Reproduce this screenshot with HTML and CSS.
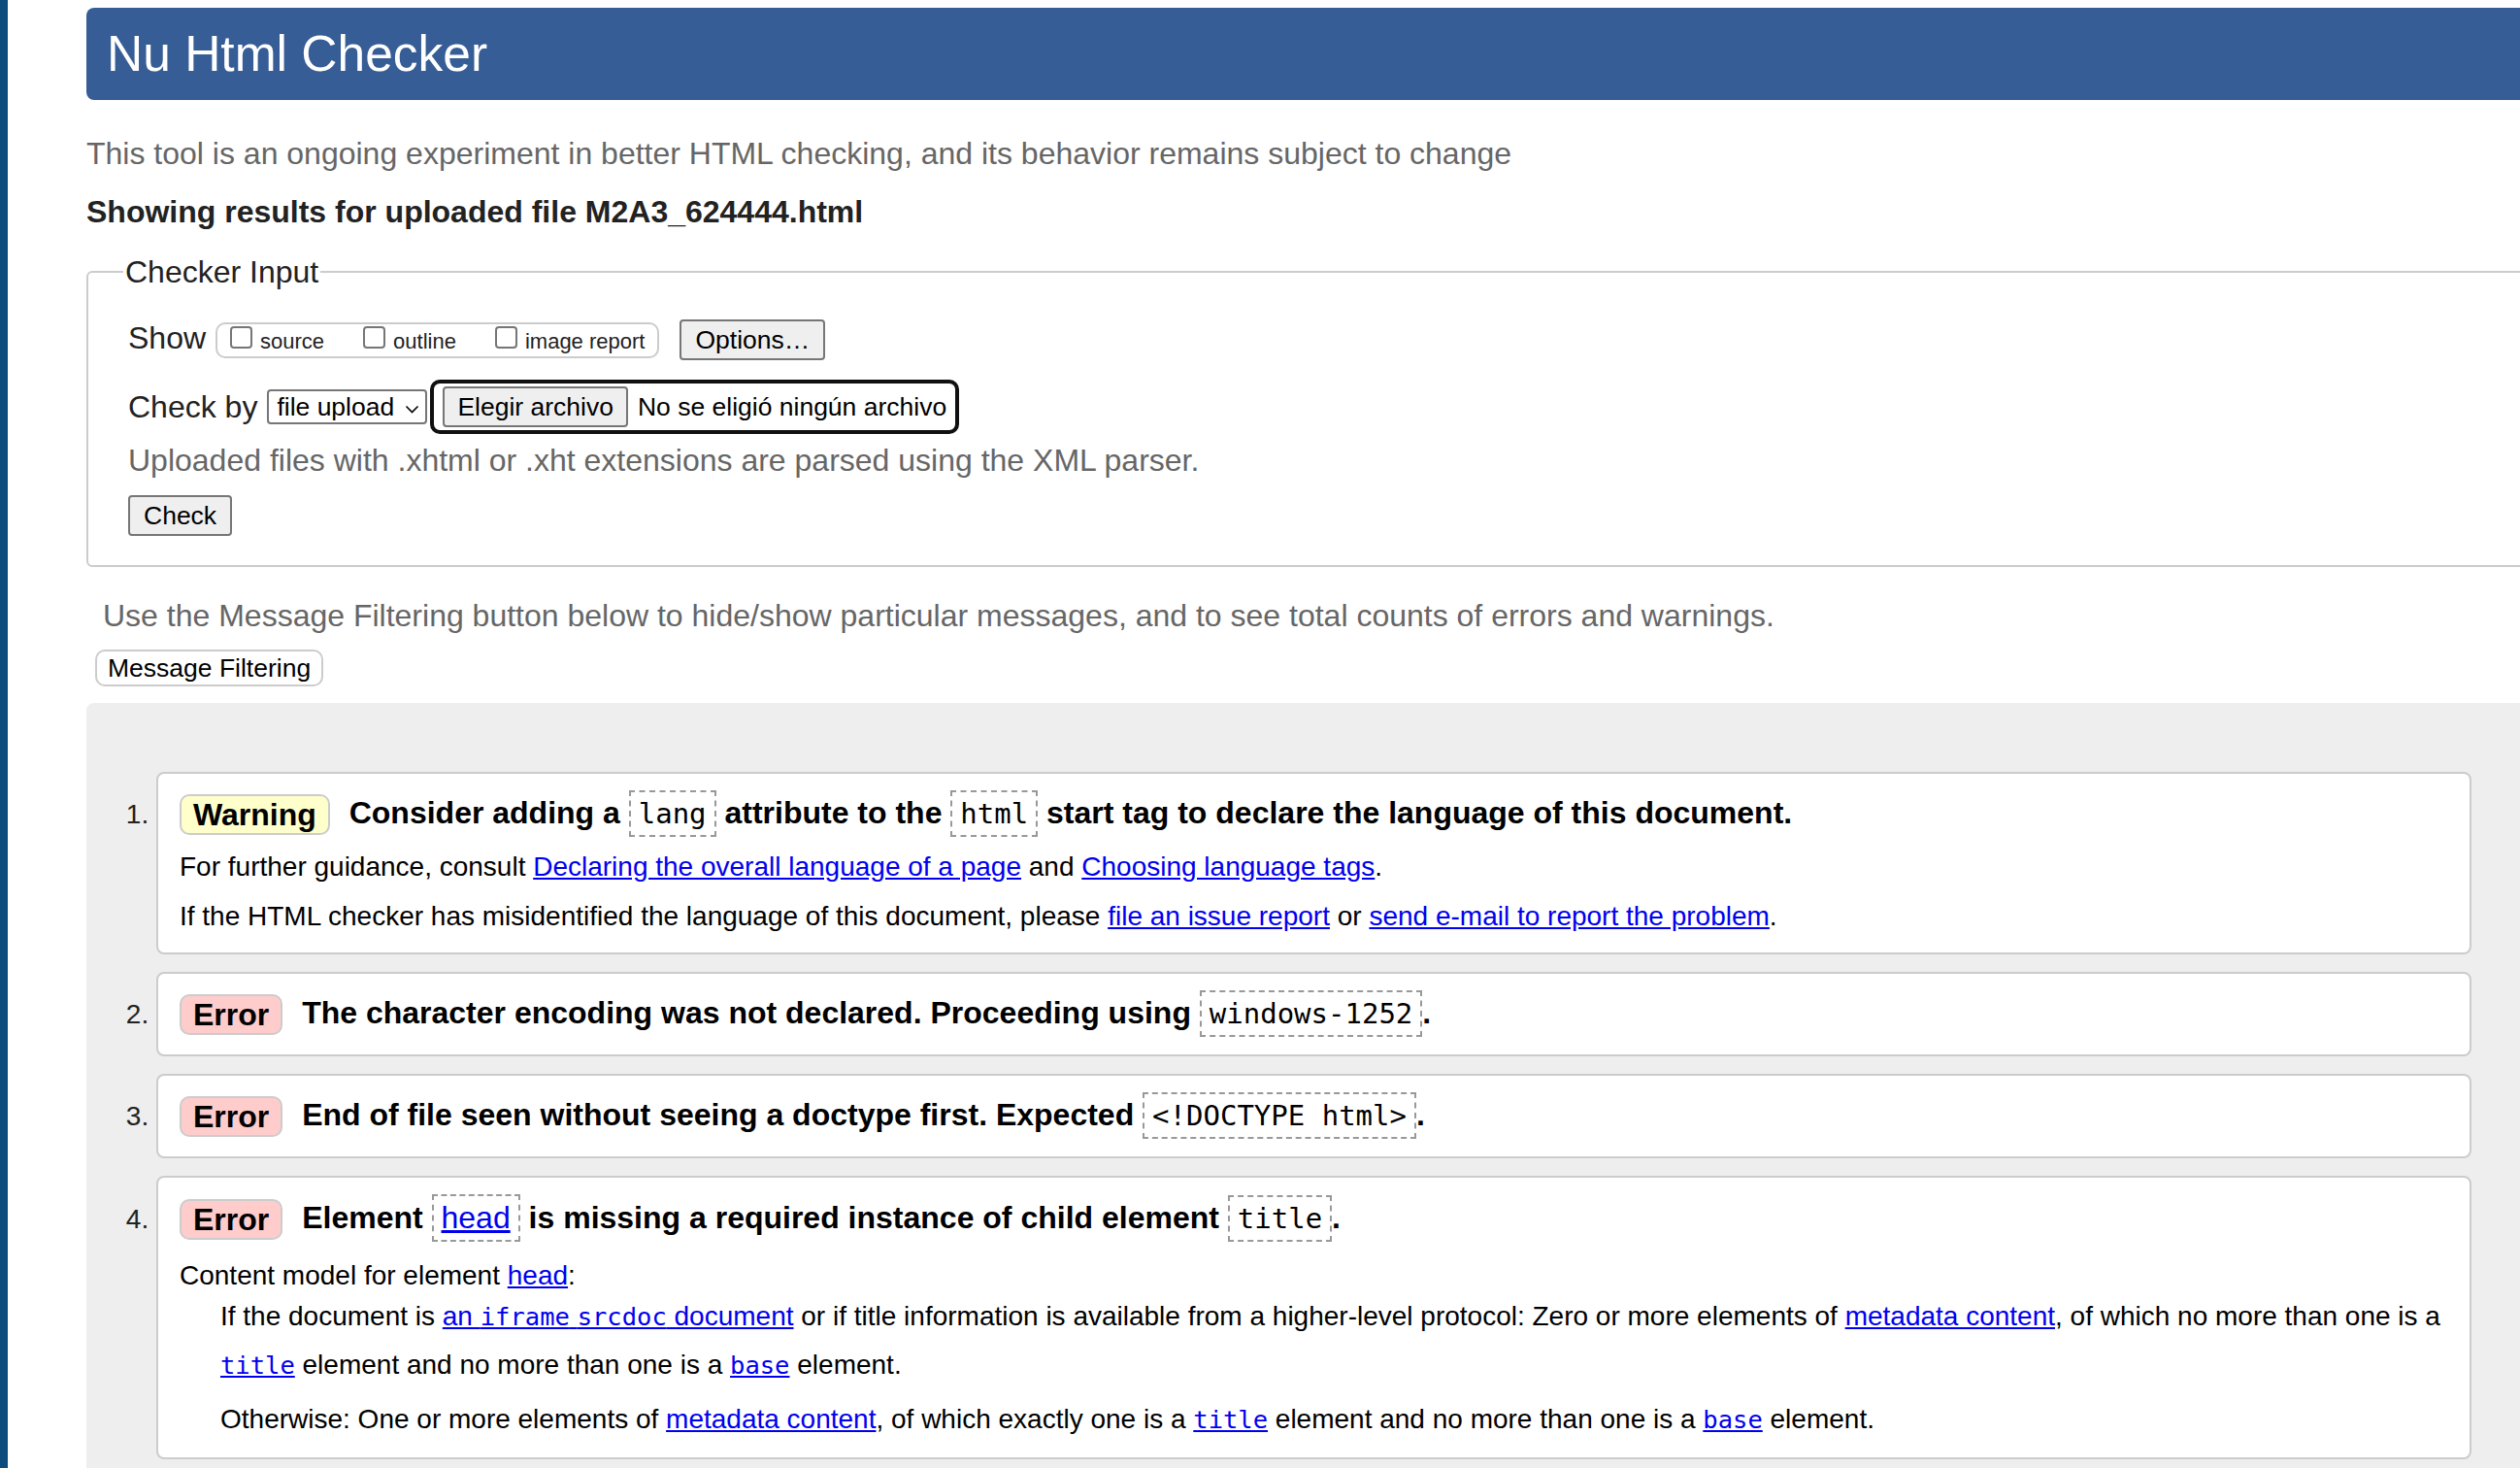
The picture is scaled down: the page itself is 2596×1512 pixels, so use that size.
FILE: index.html
```html
<!DOCTYPE html>
<html lang="en">
<head>
<meta charset="utf-8">
<title>Nu Html Checker</title>
<link rel="stylesheet" href="styles.css">
</head>
<body>
<header class="masthead"><h1>Nu Html Checker</h1></header>
<p class="lead">This tool is an ongoing experiment in better HTML checking, and its behavior remains subject to change</p>
<p class="result-for">Showing results for uploaded file M2A3_624444.html</p>
<fieldset class="input">
  <legend>Checker Input</legend>
  <div class="row show-row">
    <span class="row-label">Show</span>
    <span class="opts"><label class="opt"><input class="cb" type="checkbox">source</label><label class="opt"><input class="cb" type="checkbox">outline</label><label class="opt"><input class="cb" type="checkbox">image report</label></span>
    <button class="btn options-btn" type="button">Options…</button>
  </div>
  <div class="row check-row">
    <span class="row-label">Check by</span>
    <span class="select"><span class="select-text">file upload</span><svg class="chev" width="15" height="9" viewBox="0 0 15 9"><polyline points="1.5,1.5 7.5,7.5 13.5,1.5" fill="none" stroke="#000" stroke-width="1.6"/></svg></span>
    <span class="file"><button class="btn file-btn" type="button">Elegir archivo</button><span class="file-name">No se eligió ningún archivo</span></span>
  </div>
  <p class="note">Uploaded files with .xhtml or .xht extensions are parsed using the XML parser.</p>
  <button class="btn check-btn" type="button">Check</button>
</fieldset>
<p class="filter-note">Use the Message Filtering button below to hide/show particular messages, and to see total counts of errors and warnings.</p>
<button class="filter-btn" type="button">Message Filtering</button>
<section class="results">
  <ol class="msgs">
    <li class="msg">
      <p class="head"><span class="badge warn">Warning</span> Consider adding a <code class="cbox">lang</code> attribute to the <code class="cbox">html</code> start tag to declare the language of this document.</p>
      <p class="info first">For further guidance, consult <a href="#">Declaring the overall language of a page</a> and <a href="#">Choosing language tags</a>.</p>
      <p class="info last">If the HTML checker has misidentified the language of this document, please <a href="#">file an issue report</a> or <a href="#">send e-mail to report the problem</a>.</p>
    </li>
    <li class="msg">
      <p class="head"><span class="badge err">Error</span> The character encoding was not declared. Proceeding using <code class="cbox">windows-1252</code>.</p>
    </li>
    <li class="msg">
      <p class="head"><span class="badge err">Error</span> End of file seen without seeing a doctype first. Expected <code class="cbox">&lt;!DOCTYPE html&gt;</code>.</p>
    </li>
    <li class="msg">
      <p class="head"><span class="badge err">Error</span> Element <code class="cbox"><a class="sans" href="#">head</a></code> is missing a required instance of child element <code class="cbox">title</code>.</p>
      <p class="cm">Content model for element <a href="#">head</a>:</p>
      <div class="dd">
        <p class="dd-first">If the document is <a href="#">an <code>iframe</code> <code>srcdoc</code> document</a> or if title information is available from a higher-level protocol: Zero or more elements of <a href="#">metadata content</a>, of which no more than one is a <a href="#"><code>title</code></a> element and no more than one is a <a href="#"><code>base</code></a> element.</p>
        <p class="dd-last">Otherwise: One or more elements of <a href="#">metadata content</a>, of which exactly one is a <a href="#"><code>title</code></a> element and no more than one is a <a href="#"><code>base</code></a> element.</p>
      </div>
    </li>
  </ol>
</section>
</body>
</html>
```
FILE: styles.css
```css
html, body {
  margin: 0;
  overflow: hidden;
}
body {
  background: #fff;
  color: #222;
  font-family: "Liberation Sans", Arial, sans-serif;
  font-size: 26.5px;
  border-left: 8px solid #0e4c7e;
  padding-left: 81px;
  min-height: 1512px;
  box-sizing: border-box;
}
.masthead {
  margin: 8px -16px 0 0;
  height: 95px;
  background: #365d95;
  border-radius: 8px 0 0 8px;
  padding-left: 21px;
}
.masthead h1 {
  margin: 0;
  font-size: 51.5px;
  font-weight: normal;
  line-height: 95px;
  color: #fff;
}
.lead {
  margin: 35px 0 0;
  font-size: 32px;
  line-height: 40px;
  color: #666;
}
.result-for {
  margin: 20px 0 0;
  font-size: 32px;
  line-height: 40px;
  font-weight: bold;
  color: #222;
}
fieldset.input {
  margin: 22px -16px 0 0;
  padding: 29px 0 30px 41px;
  border: 2px solid #ccc;
  border-radius: 6px;
  min-width: 0;
}
fieldset.input legend {
  font-size: 32px;
  line-height: 40px;
  padding: 0 2px;
  margin-left: -5px;
}
.row {
  display: flex;
  align-items: center;
}
.show-row {
  height: 42px;
}
.row-label {
  font-size: 32px;
  line-height: 40px;
}
.show-row .row-label {
  padding-bottom: 4px;
}
.opts {
  margin-left: 10px;
  height: 37px;
  box-sizing: border-box;
  border: 2px solid #ccc;
  border-radius: 10px;
  padding: 2px 13px 0 13px;
  font-size: 22px;
  line-height: 30px;
  white-space: nowrap;
}
.opt + .opt {
  margin-left: 40px;
}
.cb {
  appearance: none;
  -webkit-appearance: none;
  width: 23px;
  height: 23px;
  margin: 0 8px 0 0;
  border: 2px solid #767676;
  border-radius: 4px;
  background: #fff;
  box-sizing: border-box;
  vertical-align: baseline;
}
.btn {
  font-family: "Liberation Sans", Arial, sans-serif;
  font-size: 26.5px;
  height: 42px;
  padding: 0 14px;
  border: 2px solid #767676;
  border-radius: 4px;
  background: #efefef;
  color: #000;
}
.options-btn {
  margin-left: 21px;
}
.check-row {
  margin-top: 20px;
  height: 56px;
}
.select {
  margin-left: 10px;
  width: 165px;
  height: 36px;
  box-sizing: border-box;
  display: flex;
  align-items: center;
  border: 2px solid #767676;
  border-radius: 4px;
  padding: 0 6px 0 8px;
  background: #fff;
  color: #000;
  font-size: 26.5px;
}
.chev {
  margin-left: auto;
  margin-top: 4px;
}
.file {
  margin-left: 3px;
  height: 56px;
  box-sizing: border-box;
  display: flex;
  align-items: center;
  border: 4px solid #101010;
  border-radius: 10px;
  padding: 0 9px;
  color: #000;
}
.file-btn {
  padding: 0 13px;
}
.file-name {
  margin-left: 10px;
  font-size: 26.5px;
}
.note {
  margin: 7px 0 0;
  font-size: 32px;
  line-height: 40px;
  color: #666;
}
.check-btn {
  display: block;
  margin-top: 16px;
}
.filter-note {
  margin: 30px 0 0;
  padding-left: 17px;
  font-size: 32px;
  line-height: 40px;
  color: #666;
}
.filter-btn {
  display: block;
  margin: 15px 0 0 9px;
  height: 38px;
  padding: 0 11px;
  border: 2px solid #ccc;
  border-radius: 10px;
  background: #fff;
  color: #000;
  font-family: "Liberation Sans", Arial, sans-serif;
  font-size: 26.5px;
}
.results {
  margin: 17px -16px 0 0;
  background: #eee;
  border-radius: 8px 0 0 0;
  padding: 71px 66px 60px 72px;
}
.msgs {
  margin: 0;
  padding: 0;
  list-style: decimal outside;
}
.msg {
  background: #fff;
  border: 2px solid #ccc;
  border-radius: 8px;
  padding: 17px 16px 18px 22px;
  margin-bottom: 18px;
  font-size: 28px;
  color: #000;
}
.msg::marker {
  content: counter(list-item) ". ";
  color: #222;
  font-size: 28px;
}
.msg p {
  margin: 0;
}
.msg .head {
  font-size: 32px;
  line-height: 40px;
  font-weight: bold;
}
.badge {
  display: inline-block;
  line-height: 38px;
  padding: 0 12px;
  border: 2px solid #ccc;
  border-radius: 10px;
  margin-right: 11px;
  vertical-align: -2px;
}
.badge.warn {
  background: #ffffcc;
}
.badge.err {
  background: #ffcccc;
}
.cbox {
  display: inline-block;
  font-family: "DejaVu Sans Mono", monospace;
  font-size: 29px;
  line-height: 34px;
  font-weight: normal;
  padding: 5px 8px;
  border: 2px dashed #999;
}
.cbox .sans {
  font-family: "Liberation Sans", Arial, sans-serif;
  font-size: 32px;
}
a {
  color: #0000ee;
}
.msg .info {
  line-height: 51px;
}
.msg .info.first {
  margin-top: 5px;
}
.msg .info.last {
  margin-bottom: -6px;
}
.msg .cm {
  margin-top: 18px;
  line-height: 34px;
}
.dd {
  padding-left: 42px;
}
.dd code, .cm code {
  font-family: "DejaVu Sans Mono", monospace;
  font-size: 25.5px;
}
.msg .dd-first {
  line-height: 50px;
}
.msg .dd-last {
  margin: 8px 0 -2px;
  line-height: 46px;
}
```
